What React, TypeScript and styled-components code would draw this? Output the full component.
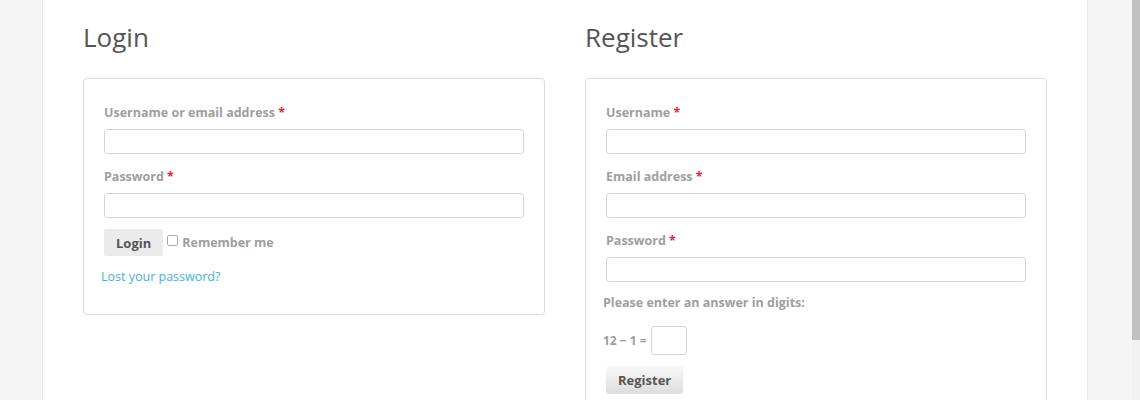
import React from "react";
import styled, { createGlobalStyle } from "styled-components";

const Global = createGlobalStyle`
  html, body { margin: 0; padding: 0; background: #f5f5f5; }
  body { font-family: "Open Sans", "Liberation Sans", sans-serif; overflow: hidden; }
`;

const Page = styled.div`
  display: flex;
  width: 1140px;
  height: 400px;
  overflow: hidden;
  background: #f5f5f5;
`;

const Gutter = styled.div<{ $w: number }>`
  width: ${(p) => p.$w}px;
  flex: none;
`;

const Content = styled.div`
  width: 1046px;
  flex: none;
  background: #fff;
  border-left: 1px solid #ebebeb;
  border-right: 1px solid #ebebeb;
  padding: 0 40px;
  box-sizing: border-box;
  display: grid;
  grid-template-columns: 462px 462px;
  column-gap: 40px;
  align-content: start;
`;

const Scrollbar = styled.div`
  width: 8px;
  flex: none;
  background: #f1f1f1;
  display: flex;
  flex-direction: column;
`;

const Thumb = styled.div`
  height: 340px;
  background: #c1c1c1;
`;

const Column = styled.section``;

const Heading = styled.h2`
  margin: 19px 0 0;
  font-family: "Open Sans", sans-serif;
  font-weight: 400;
  font-size: 26px;
  line-height: 36px;
  color: #555;
`;

const Box = styled.div`
  margin-top: 23px;
  border: 1px solid #dcdcdc;
  border-radius: 4px;
  padding: 23px 20px 27px 20px;
`;

const Field = styled.div`
  display: flex;
  flex-direction: column;
  margin-bottom: 12px;
`;

const Label = styled.label<{ $indent?: number; $top?: number }>`
  display: block;
  font-size: 12.5px;
  font-weight: 700;
  color: #9e9e9e;
  line-height: 20px;
  margin: ${(p) => p.$top ?? 1}px 0 6px ${(p) => p.$indent ?? 0}px;
`;

const Req = styled.span`
  color: #e4262c;
`;

const Input = styled.input`
  box-sizing: border-box;
  width: 420px;
  height: 25px;
  border: 1px solid #d4d4d4;
  border-radius: 3px;
  background: #fff;
  margin: 0;
  padding: 2px 6px;
  font-family: inherit;
`;

const Row = styled.div`
  display: flex;
  align-items: center;
  margin-top: -1px;
`;

const Button = styled.button<{ $gradient?: boolean }>`
  font-family: "Open Sans", sans-serif;
  font-weight: 700;
  font-size: 13px;
  color: #555;
  height: 27px;
  padding: 0 12px;
  border: none;
  border-radius: 2px;
  background: ${(p) => (p.$gradient ? "linear-gradient(#f8f8f8, #dedede)" : "#ebebeb")};
  box-shadow: ${(p) => (p.$gradient ? "0 1px 1px rgba(0,0,0,0.12)" : "none")};
  cursor: pointer;
`;

const Check = styled.span`
  box-sizing: border-box;
  width: 11px;
  height: 11px;
  border: 1px solid #a9a9a9;
  border-radius: 2px;
  margin: -4px 4px 0 4px;
  background: #fff;
`;

const CheckText = styled.span`
  font-size: 12.5px;
  font-weight: 700;
  color: #9e9e9e;
`;

const Link = styled.a`
  display: block;
  margin: 11px 0 0 -3px;
  font-size: 12.5px;
  line-height: 20px;
  color: #3bb3e2;
  text-decoration: none;
`;

const Equation = styled.div`
  display: flex;
  align-items: center;
  margin: 13px 0 11px -3px;
  font-size: 12px;
  font-weight: 700;
  color: #9e9e9e;
`;

const SmallInput = styled.input`
  box-sizing: border-box;
  width: 36px;
  height: 29px;
  margin-left: 4px;
  border: 1px solid #d4d4d4;
  border-radius: 3px;
  background: #fff;
`;

export default function App() {
  return (
    <>
      <Global />
      <Page>
        <Gutter $w={42} />
        <Content>
          <Column>
            <Heading>Login</Heading>
            <Box>
              <Field>
                <Label>
                  Username or email address <Req>*</Req>
                </Label>
                <Input type="text" />
              </Field>
              <Field>
                <Label>
                  Password <Req>*</Req>
                </Label>
                <Input type="password" />
              </Field>
              <Row>
                <Button>Login</Button>
                <Check />
                <CheckText>Remember me</CheckText>
              </Row>
              <Link href="#">Lost your password?</Link>
            </Box>
          </Column>
          <Column>
            <Heading>Register</Heading>
            <Box>
              <Field>
                <Label>
                  Username <Req>*</Req>
                </Label>
                <Input type="text" />
              </Field>
              <Field>
                <Label>
                  Email address <Req>*</Req>
                </Label>
                <Input type="email" />
              </Field>
              <Field>
                <Label>
                  Password <Req>*</Req>
                </Label>
                <Input type="password" />
              </Field>
              <Label $indent={-3} $top={-1}>
                Please enter an answer in digits:
              </Label>
              <Equation>
                12 − 1 = <SmallInput type="text" />
              </Equation>
              <Button $gradient>Register</Button>
            </Box>
          </Column>
        </Content>
        <Gutter $w={44} />
        <Scrollbar>
          <Thumb />
        </Scrollbar>
      </Page>
    </>
  );
}
